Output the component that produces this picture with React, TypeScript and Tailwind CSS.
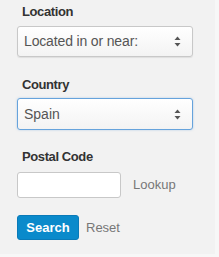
import React from "react";

function Arrows() {
  return (
    <svg width="7" height="11" viewBox="0 0 7 11" className="shrink-0">
      <path d="M3.5 0.5 L6.5 4 H0.5 Z" fill="#555" />
      <path d="M3.5 10.5 L6.5 7 H0.5 Z" fill="#555" />
    </svg>
  );
}

export default function App() {
  return (
    <div className="w-[219px] h-[257px] bg-[#f7f7f7]" style={{ fontFamily: '"Liberation Sans", Arial, sans-serif' }}>
      <div className="w-[215px] h-[254px] bg-[#f2f2f2] pl-[17px] pt-[4px] flex flex-col">
        <label className="text-[13px] font-bold text-[#333] leading-[16px] pl-[5px] tracking-[-0.4px]">Location</label>
        <div className="mt-[6px] w-[176px] h-[31px] border border-[#c8c8c8] rounded-[3px] bg-gradient-to-b from-white to-[#f3f3f3] flex items-center justify-between pl-[6px] pr-[11px] shadow-[0_1px_1px_rgba(0,0,0,0.08)]">
          <span className="text-[14px] text-[#555] tracking-[-0.15px]">Located in or near:</span>
          <Arrows />
        </div>
        <label className="mt-[20px] text-[13px] font-bold text-[#333] leading-[16px] pl-[5px] tracking-[-0.4px]">Country</label>
        <div className="mt-[5px] w-[176px] h-[32px] border border-[#66a3dc] rounded-[3px] bg-gradient-to-b from-white to-[#f3f3f3] flex items-center justify-between pl-[6px] pr-[11px] shadow-[0_0_2px_rgba(102,163,220,0.5)]">
          <span className="text-[14px] text-[#555]">Spain</span>
          <Arrows />
        </div>
        <label className="mt-[19px] text-[13px] font-bold text-[#333] leading-[16px] pl-[5px] tracking-[-0.4px]">Postal Code</label>
        <div className="mt-[7px] flex items-center">
          <div className="w-[104px] h-[26px] border border-[#c8c8c8] rounded-[3px] bg-white" />
          <span className="ml-[12px] text-[13px] text-[#777]">Lookup</span>
        </div>
        <div className="mt-[17px] flex items-center">
          <button className="w-[62px] h-[25px] rounded-[3px] bg-[#0a8acb] border border-[#0a7ab8] text-white text-[13px] font-bold">Search</button>
          <span className="ml-[7px] text-[13px] text-[#777]">Reset</span>
        </div>
      </div>
    </div>
  );
}
